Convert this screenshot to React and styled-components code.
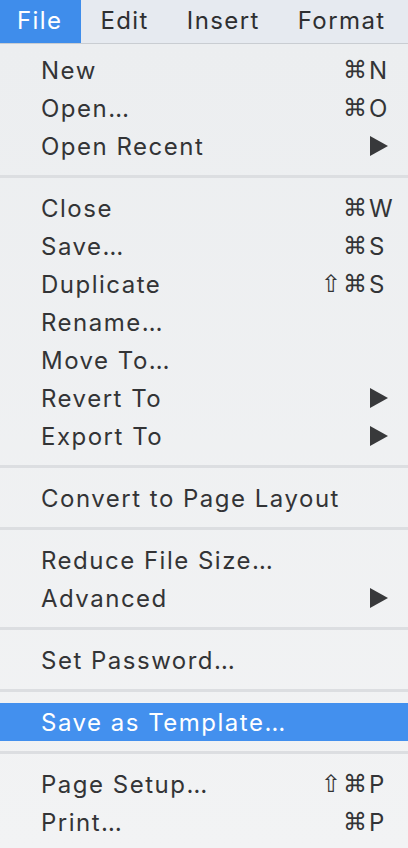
import styled, { createGlobalStyle } from "styled-components";

const GlobalStyle = createGlobalStyle`
  html, body {
    margin: 0;
    padding: 0;
    background: #eff0f2;
  }
  body {
    font-family: Inter, "Open Sans", "DejaVu Sans", sans-serif;
    color: #333436;
  }
`;

const menubar = ["File", "Edit", "Insert", "Format"];

const menu = [
  [
    { label: "New", mods: "⌘", key: "N" },
    { label: "Open...", mods: "⌘", key: "O" },
    { label: "Open Recent", sub: true },
  ],
  [
    { label: "Close", mods: "⌘", key: "W" },
    { label: "Save...", mods: "⌘", key: "S" },
    { label: "Duplicate", mods: "⇧⌘", key: "S" },
    { label: "Rename..." },
    { label: "Move To..." },
    { label: "Revert To", sub: true },
    { label: "Export To", sub: true },
  ],
  [{ label: "Convert to Page Layout" }],
  [
    { label: "Reduce File Size..." },
    { label: "Advanced", sub: true },
  ],
  [{ label: "Set Password..." }],
  [{ label: "Save as Template...", active: true }],
  [
    { label: "Page Setup...", mods: "⇧⌘", key: "P" },
    { label: "Print...", mods: "⌘", key: "P" },
  ],
];

function App() {
  return (
    <>
      <GlobalStyle />
      <Screen>
        <MenuBar>
          {menubar.map((m, i) => (
            <BarItem key={m} $open={i === 0}>
              {m}
            </BarItem>
          ))}
        </MenuBar>
        <Menu>
          {menu.map((group, gi) => (
            <Group key={gi}>
              {gi > 0 && <Separator />}
              {group.map((item) => (
                <Row key={item.label} $active={item.active}>
                  <Label>{item.label.replace(/\.\.\.$/, "…")}</Label>
                  {item.key && (
                    <Shortcut>
                      <Mods>{item.mods}</Mods>
                      <Key>{item.key}</Key>
                    </Shortcut>
                  )}
                  {item.sub && (
                    <Arrow viewBox="0 0 18 20">
                      <path d="M0 0 L18 10 L0 20 Z" />
                    </Arrow>
                  )}
                </Row>
              ))}
            </Group>
          ))}
        </Menu>
      </Screen>
    </>
  );
}

export default App;

const Screen = styled.div`
  width: 408px;
  height: 848px;
  overflow: hidden;
  display: flex;
  flex-direction: column;
  background: #eff0f2;
`;

const MenuBar = styled.div`
  display: flex;
  height: 43px;
  background: #e6eaf0;
  border-bottom: 1px solid #c9cdd2;
  flex-shrink: 0;
`;

const BarItem = styled.div`
  display: flex;
  align-items: center;
  padding: 0 19px 2px 17px;
  margin-right: 2px;
  font-size: 24px;
  letter-spacing: 1.4px;
  color: ${(p) => (p.$open ? "#ffffff" : "#2e2f31")};
  background: ${(p) => (p.$open ? "#3f8deb" : "transparent")};
`;

const Menu = styled.div`
  display: flex;
  flex-direction: column;
  padding-top: 7px;
  background: linear-gradient(#eceef0, #f2f3f4);
  flex: 1;
`;

const Group = styled.div`
  display: flex;
  flex-direction: column;
`;

const Separator = styled.div`
  height: 3px;
  margin: 10px 0 11px;
  background: #dcdee1;
`;

const Row = styled.div`
  display: flex;
  align-items: center;
  height: 38px;
  padding-left: 41px;
  font-size: 24px;
  letter-spacing: 1.5px;
  color: ${(p) => (p.$active ? "#ffffff" : "#333436")};
  background: ${(p) => (p.$active ? "#4390ee" : "transparent")};
`;

const Label = styled.span`
  flex: 1;
  white-space: nowrap;
`;

const Shortcut = styled.span`
  display: flex;
  align-items: center;
`;

const Mods = styled.span`
  width: 70px;
  text-align: right;
  font-family: "DejaVu Sans", sans-serif;
  font-size: 24px;
  letter-spacing: 2px;
`;

const Key = styled.span`
  width: 39px;
  letter-spacing: 0;
`;

const Arrow = styled.svg`
  width: 18px;
  height: 20px;
  margin-right: 20px;
  fill: #38393b;
`;
